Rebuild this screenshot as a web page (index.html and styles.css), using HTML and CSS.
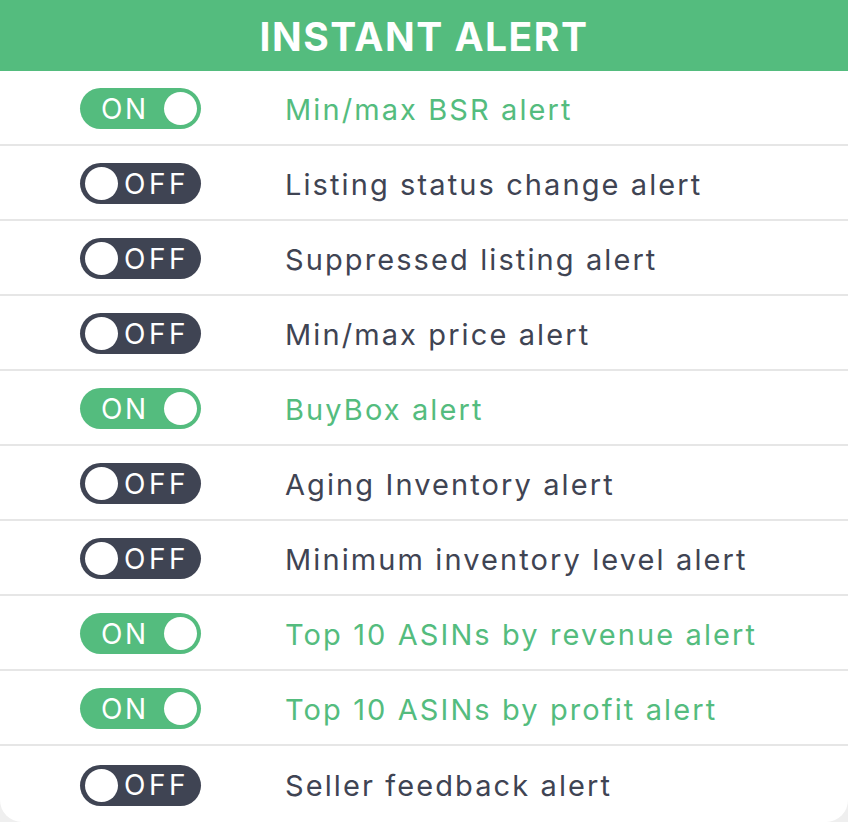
FILE: index.html
```html
<!DOCTYPE html>
<html lang="en">
<head>
  <meta charset="UTF-8">
  <meta name="viewport" content="width=device-width, initial-scale=1.0">
  <title>Instant Alert</title>
  <link rel="stylesheet" href="styles.css">
</head>
<body>
  <div class="card">
    <h1 class="card-title">INSTANT ALERT</h1>
    <ul class="alert-list">
      <li class="alert-row on">
        <span class="toggle"><span class="toggle-label">ON</span><span class="knob"></span></span>
        <span class="alert-name">Min/max BSR alert</span>
      </li>
      <li class="alert-row">
        <span class="toggle"><span class="knob"></span><span class="toggle-label">OFF</span></span>
        <span class="alert-name">Listing status change alert</span>
      </li>
      <li class="alert-row">
        <span class="toggle"><span class="knob"></span><span class="toggle-label">OFF</span></span>
        <span class="alert-name">Suppressed listing alert</span>
      </li>
      <li class="alert-row">
        <span class="toggle"><span class="knob"></span><span class="toggle-label">OFF</span></span>
        <span class="alert-name">Min/max price alert</span>
      </li>
      <li class="alert-row on">
        <span class="toggle"><span class="toggle-label">ON</span><span class="knob"></span></span>
        <span class="alert-name">BuyBox alert</span>
      </li>
      <li class="alert-row">
        <span class="toggle"><span class="knob"></span><span class="toggle-label">OFF</span></span>
        <span class="alert-name">Aging Inventory alert</span>
      </li>
      <li class="alert-row">
        <span class="toggle"><span class="knob"></span><span class="toggle-label">OFF</span></span>
        <span class="alert-name">Minimum inventory level alert</span>
      </li>
      <li class="alert-row on">
        <span class="toggle"><span class="toggle-label">ON</span><span class="knob"></span></span>
        <span class="alert-name">Top 10 ASINs by revenue alert</span>
      </li>
      <li class="alert-row on">
        <span class="toggle"><span class="toggle-label">ON</span><span class="knob"></span></span>
        <span class="alert-name">Top 10 ASINs by profit alert</span>
      </li>
      <li class="alert-row last">
        <span class="toggle"><span class="knob"></span><span class="toggle-label">OFF</span></span>
        <span class="alert-name">Seller feedback alert</span>
      </li>
    </ul>
  </div>
</body>
</html>
```

FILE: styles.css
```css
body {
  margin: 0;
  background-color: #efefef;
  font-family: Inter, "Noto Sans", sans-serif;
}
.card {
  width: 848px;
  height: 822px;
  background-color: #fff;
  border-radius: 0 0 22px 22px;
  overflow: hidden;
}
.card-title {
  margin: 0;
  height: 71px;
  line-height: 74px;
  background-color: #54bc7e;
  color: #fff;
  font-size: 39px;
  font-weight: 700;
  text-align: center;
  letter-spacing: 1.5px;
}
.alert-list {
  list-style: none;
  margin: 0;
  padding: 0;
}
.alert-row {
  display: flex;
  align-items: center;
  height: 73px;
  border-bottom: 2px solid #e6e6e6;
  padding-left: 80px;
}
.alert-row.last {
  border-bottom: none;
  height: 76px;
}
.toggle {
  display: flex;
  align-items: center;
  gap: 6px;
  box-sizing: border-box;
  width: 121px;
  height: 41px;
  margin-top: 2px;
  padding: 0 5px;
  border-radius: 21px;
  background-color: #3f4453;
  color: #fff;
  font-size: 28px;
  letter-spacing: 3.5px;
  margin-right: 84px;
}
.on .toggle {
  justify-content: space-between;
  padding: 0 4px 0 21px;
  letter-spacing: 2.5px;
  background-color: #54bc7e;
}
.knob {
  flex: none;
  width: 33px;
  height: 33px;
  border-radius: 50%;
  background-color: #fff;
}
.alert-name {
  padding-top: 3px;
  font-size: 29px;
  letter-spacing: 2.1px;
  color: #3f4453;
}
.on .alert-name {
  color: #54bc7e;
}
```
